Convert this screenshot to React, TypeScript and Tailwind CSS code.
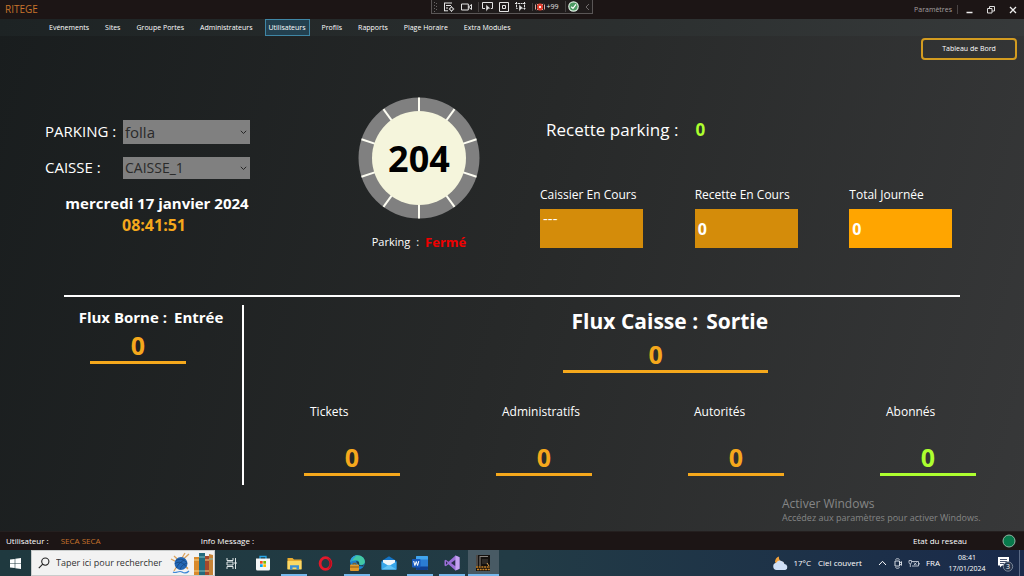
import type { ReactNode } from 'react';

const menu = ['Evénements', 'Sites', 'Groupe Portes', 'Administrateurs', 'Utilisateurs', 'Profils', 'Rapports', 'Plage Horaire', 'Extra Modules'];

const cards = [
  { label: 'Caissier En Cours', value: '---', box: 'bg-[#d48c0a] items-start text-[15px] leading-[19px]' },
  { label: 'Recette En Cours', value: '0', box: 'bg-[#d48c0a] items-center text-[16px] font-bold' },
  { label: 'Total Journée', value: '0', box: 'bg-[#ffa500] items-center text-[16px] font-bold' },
];

const stats = [
  { label: 'Tickets', tone: 'border-[#f5a81c] text-[#f5a81c]' },
  { label: 'Administratifs', tone: 'border-[#f5a81c] text-[#f5a81c]' },
  { label: 'Autorités', tone: 'border-[#f5a81c] text-[#f5a81c]' },
  { label: 'Abonnés', tone: 'border-[#adff2f] text-[#adff2f]' },
];

function DebugToolbar() {
  return (
    <div className="flex h-[14px] items-center gap-[6px] border border-t-0 border-[#5a5656] bg-[#1f1b1b] px-[2px] text-[#e4e4e4]">
      <svg width="4" height="12" viewBox="0 0 4 12" fill="#6a6666">
        <path d="M0 1h1v1H0zM2 2h1v1H2zM0 4h1v1H0zM2 5h1v1H2zM0 7h1v1H0zM2 8h1v1H2zM0 10h1v1H0z" />
      </svg>
      <button type="button" aria-label="Arborescence">
        <svg width="11" height="10" viewBox="0 0 11 10" fill="none" stroke="currentColor">
          <path d="M0 1h8M.5 1v8M2 3.500h5M2 6h2M0 8.800h4" />
          <circle cx="7.500" cy="7" r="1.700" />
          <path d="M7.500 4.200v1M7.500 8.800v1M4.900 7h1M9.200 7h1" />
        </svg>
      </button>
      <button type="button" aria-label="Caméra">
        <svg width="11" height="8" viewBox="0 0 11 8" fill="none" stroke="currentColor">
          <path d="M.5 1h6.800v6H.5zM7.500 4l3-2.500v5z" />
        </svg>
      </button>
      <button type="button" aria-label="Sélectionner" className="border-l border-[#454141] pl-[3px]">
        <svg width="11" height="10" viewBox="0 0 11 10" fill="none" stroke="currentColor">
          <path d="M3 6.500H.5v-6h10v6H9" />
          <path d="M4 2.500l4.800 4.300H6.500L4 9.500z" fill="currentColor" stroke="#1f1b1b" strokeWidth=".4" />
        </svg>
      </button>
      <button type="button" aria-label="Disposition">
        <svg width="10" height="10" viewBox="0 0 10 10" fill="none" stroke="currentColor">
          <path d="M.5.500h9v9h-9zM3.500 3.500h3v3h-3z" />
        </svg>
      </button>
      <button type="button" aria-label="Suivre le focus">
        <svg width="11" height="10" viewBox="0 0 11 10" fill="none" stroke="currentColor">
          <path d="M0 1.500h3M8 1.500h3M1.500 0v3M9.500 0v3M3 1.500h5M1.500 3v3.500H3M9.500 3v5M8 6.500h3" strokeDasharray="2 .6" />
          <path d="M4 2.500l4.800 4.300H6.500L4 9.500z" fill="currentColor" stroke="#1f1b1b" strokeWidth=".4" />
        </svg>
      </button>
      <button type="button" className="flex items-center gap-px border-l border-[#454141] pl-[2px] text-[7px] leading-none">
        <svg width="10" height="8" viewBox="0 0 10 8">
          <rect x="2" y=".5" width="6" height="7" rx="2.500" fill="#e0402f" />
          <path d="M.5 1.500v5M9.500 1.500v5M2 .8l1 1.200M8 .8L7 2M2 7.200L3 6M8 7.200L7 6" stroke="#f3b5ad" strokeWidth=".9" />
          <path d="M4 3l2 2M6 3L4 5" stroke="#fff" strokeWidth=".9" />
        </svg>
        +99
      </button>
      <button type="button" aria-label="État correct" className="border-l border-[#454141] pl-[2px]">
        <svg width="11" height="11" viewBox="0 0 11 11">
          <circle cx="5.500" cy="5.500" r="5.300" fill="#dfeee2" />
          <circle cx="5.500" cy="5.500" r="4.100" fill="#4c9a63" />
          <path d="M3.200 5.700l1.800 1.700 3-4" fill="none" stroke="#fff" strokeWidth="1.200" />
        </svg>
      </button>
      <button type="button" aria-label="Réduire la barre">
        <svg width="5" height="8" viewBox="0 0 5 8" fill="none" stroke="#6f6b6b">
          <path d="M4 1L1 4l3 3" />
        </svg>
      </button>
    </div>
  );
}

function Gauge() {
  const angles = [0, 36, 72, 108, 144, 180, 216, 252, 288, 324];
  return (
    <svg width="122" height="122" viewBox="0 0 122 122" role="img" aria-label="204">
      <circle cx="61" cy="61" r="60.500" fill="#808080" />
      {angles.map((a) => (
        <path key={a} d="M61 0.500V16" stroke="#fdfdf2" strokeWidth="2" transform={`rotate(${a} 61 61)`} />
      ))}
      <circle cx="61" cy="61" r="47" fill="#f5f5dc" />
      <text x="61" y="75" textAnchor="middle" fontSize="36" fontWeight="700" fill="#000">204</text>
    </svg>
  );
}

function Picker({ id, label, value, size }: { id: string; label: string; value: string; size: string }) {
  return (
    <div className="flex items-center">
      <label htmlFor={id} className="w-[78px] pb-[2px] text-[15px] leading-5 whitespace-nowrap">{label}</label>
      <div className="grid w-[127px] items-center">
        <select id={id} defaultValue={value} className={`col-start-1 row-start-1 w-full appearance-none bg-[#808080] px-[2px] leading-[22px] text-[#2a2a2a] ${size}`}>
          <option>{value}</option>
        </select>
        <svg className="pointer-events-none col-start-1 row-start-1 mr-[3px] justify-self-end" width="7" height="5" viewBox="0 0 7 5" fill="none" stroke="#262626">
          <path d="M.8.800L3.500 3.500 6.200.800" />
        </svg>
      </div>
    </div>
  );
}

function TaskButton({ label, open, active, children }: { label: string; open?: boolean; active?: boolean; children: ReactNode }) {
  return (
    <button
      type="button"
      aria-label={label}
      className={`flex justify-center pt-[2px] ${active ? 'bg-[#485a64]' : ''}`}
    >
      <span className={`flex h-full items-center justify-center border-b-2 ${active ? 'w-full' : 'w-[26px]'} ${open ? 'border-[#76b9ed]' : 'border-transparent'}`}>
        {children}
      </span>
    </button>
  );
}

function Taskbar() {
  return (
    <div className="flex h-[26px] items-stretch bg-linear-to-r from-[#1f393f] via-[#223b45] to-[#1a2a4a] text-white">
      <button type="button" aria-label="Démarrer" className="flex w-[31px] items-center justify-center">
        <svg width="11" height="11" viewBox="0 0 11 11" fill="#fff">
          <path d="M0 1.600L4.700.900v4.300H0zM5.300.800L11 0v5.200H5.300zM0 5.800h4.700v4.300L0 9.400zM5.300 5.800H11V11l-5.700-.8z" />
        </svg>
      </button>
      <div className="flex w-[184px] items-center border border-[#c9cccc] bg-[#f2f2f2] pl-[6px] text-[#333]">
        <svg width="12" height="12" viewBox="0 0 12 12" fill="none" stroke="#222" strokeWidth="1.100">
          <circle cx="7.300" cy="4.600" r="3.600" />
          <path d="M4.700 7.200L.8 11.200" />
        </svg>
        <input
          aria-label="Rechercher"
          placeholder="Taper ici pour rechercher"
          className="ml-[6px] min-w-0 flex-1 bg-transparent text-[9px] outline-none placeholder:text-[#333]"
        />
        <svg width="44" height="24" viewBox="0 0 44 24">
          <path d="M1 8l17 9M15 2L4 20M4 5l14 13M19 3L9 12" stroke="#dba25c" strokeWidth="1.300" />
          <circle cx="11" cy="12.500" r="6.500" fill="#2367b5" />
          <path d="M6 9.500c4-2.500 8-1 10.500 2M5 12.500c4-2.500 8-1 11 3M6.500 17c2-5 5-6 8-8.500M10 18.500c2-5 4-5 7-6.500" fill="none" stroke="#15467f" strokeWidth=".8" />
          <path d="M3 21c3 2 6-2 9 0s5 1 7-1" fill="none" stroke="#3c86d6" strokeWidth="1.200" />
          <path d="M24 6h5v18h-5z" fill="#d98a2b" />
          <path d="M29 2h6v22h-6z" fill="#246b7d" />
          <path d="M35 5h4v19h-4z" fill="#a5482d" />
          <path d="M39 3l4 1v20h-4z" fill="#c78436" />
          <path d="M24 9h5M24 20h5M35 9h4M35 20h4" stroke="#f2d08a" />
          <path d="M29 6h6M29 20h6M39 8h4" stroke="#7fc0c2" />
        </svg>
      </div>
      <button type="button" aria-label="Affichage des tâches" className="flex w-8 items-center justify-center">
        <svg width="11" height="11" viewBox="0 0 11 11" fill="none" stroke="#dfe6e8">
          <path d="M1 0v2.500h6V0M1 11V8.500h6V11M1 4h6v3H1zM9.500 0v11" />
          <path d="M8.500 4h2v2h-2z" fill="#dfe6e8" stroke="none" />
        </svg>
      </button>
      <div className="grid w-[252px] grid-cols-8">
        <TaskButton label="Microsoft Store">
          <svg width="16" height="16" viewBox="0 0 16 16">
            <path d="M5 4V1.500h6V4" fill="none" stroke="#2aa7e8" strokeWidth="1.300" />
            <path d="M1 3.500h14V14a1.500 1.500 0 0 1-1.500 1.500h-11A1.500 1.500 0 0 1 1 14z" fill="#f4f6f7" />
            <path d="M5 6h2.700v2.700H5z" fill="#f25022" />
            <path d="M8.300 6H11v2.700H8.300z" fill="#7fba00" />
            <path d="M5 9.300h2.700V12H5z" fill="#00a4ef" />
            <path d="M8.300 9.300H11V12H8.300z" fill="#ffb900" />
          </svg>
        </TaskButton>
        <TaskButton label="Explorateur de fichiers" open>
          <svg width="15" height="13" viewBox="0 0 15 13">
            <path d="M.5 1h5l1.500 1.500h7.500V12H.5z" fill="#e9ab2f" />
            <path d="M.5 4h14v8.500H.5z" fill="#fbd865" />
            <path d="M3 12.500V8.200h9v4.300h-2.500v-2h-4v2z" fill="#3c8fd6" />
          </svg>
        </TaskButton>
        <TaskButton label="Opera">
          <svg width="15" height="15" viewBox="0 0 15 15">
            <ellipse cx="7.500" cy="7.500" rx="5.400" ry="5.900" fill="none" stroke="#e3192b" strokeWidth="2.800" />
            <path d="M9.500 2.200c3 2 3 8.600 0 10.600 5.500-1 5.500-9.600 0-10.600z" fill="#b30c1d" />
          </svg>
        </TaskButton>
        <TaskButton label="Microsoft Edge" open>
          <svg width="16" height="16" viewBox="0 0 16 16">
            <circle cx="8.500" cy="7.500" r="7.300" fill="#1b82cf" />
            <path d="M1.300 7C2 2.500 5 .2 8.500.2c5 0 8 4 7.300 7.300-.5 2.300-4 3-6 1.800.8-1.500.3-4-2.600-4C4.500 5.300 2.500 6 1.300 7z" fill="#43c9a4" />
            <path d="M1.300 7c0-4 3.500-6.800 7.200-6.800C6 1.500 4 3.500 3.500 5.600z" fill="#2f9be0" />
            <path d="M7 6.500c2-1 4 1 3 3 1.500 1.200 3.500 1 5 0l-1 2-4-.5z" fill="#20404a" />
            <rect x="1" y="9.500" width="9" height="6.500" rx="1" fill="#e09a2c" />
            <path d="M4 9.500V8.300h3v1.200" fill="none" stroke="#8a5a14" />
            <path d="M1 12h9" stroke="#8a5a14" />
          </svg>
        </TaskButton>
        <TaskButton label="Courrier">
          <svg width="16" height="14" viewBox="0 0 16 14">
            <path d="M.5 5L8 .3 15.500 5v8.500H.5z" fill="#1474c4" />
            <path d="M2 4h12v6H2z" fill="#eef5fa" />
            <path d="M.5 5.500L8 10l7.500-4.500v8H.5z" fill="#37a6ea" />
            <path d="M.5 13.500L8 8.800l7.500 4.700z" fill="#62c3f5" />
          </svg>
        </TaskButton>
        <TaskButton label="Word" open>
          <svg width="16" height="14" viewBox="0 0 16 14">
            <rect x="4" width="12" height="14" rx="1" fill="#2b7cd3" />
            <path d="M4 1a1 1 0 0 1 1-1h10a1 1 0 0 1 1 1v2.500H4z" fill="#41a5ee" />
            <path d="M4 10.500h12V13a1 1 0 0 1-1 1H5a1 1 0 0 1-1-1z" fill="#103f91" />
            <rect y="3" width="8.500" height="8.500" rx=".8" fill="#185abd" />
            <path d="M1.700 5l1.200 4.500L4.250 5.500 5.600 9.500 6.800 5" fill="none" stroke="#fff" />
          </svg>
        </TaskButton>
        <TaskButton label="Visual Studio" open>
          <svg width="16" height="16" viewBox="0 0 16 16">
            <path d="M11.500.5l4 1.800v11.400l-4 1.800-7-6.300-2.700 2.100L.5 10.600V5.400l1.300-.7 2.700 2.100z" fill="#9b6fd8" />
            <path d="M11.500 4.700v6.600L7 8zM2 6.300v3.400L3.700 8z" fill="#2a2d4a" />
            <path d="M11.500.5l4 1.800v11.400l-4 1.800z" fill="#c4a2f0" />
          </svg>
        </TaskButton>
        <TaskButton label="Ritege" open active>
          <svg width="16" height="16" viewBox="0 0 16 16">
            <path d="M1 0h14v16H1z" fill="#15110e" />
            <path d="M2 0v11M5 1v10M5 1.500h8" stroke="#8a8580" />
            <path d="M7 4h6v5H7z" fill="#2e2a27" />
            <path d="M1 12h14M2 14.500h13" stroke="#c98227" strokeWidth="1.500" strokeDasharray="2 .7" />
            <path d="M12 8l2 3" stroke="#d9a55a" />
          </svg>
        </TaskButton>
      </div>
      <div className="ml-auto flex items-center text-[8px] whitespace-nowrap">
        <svg width="17" height="15" viewBox="0 0 17 15">
          <path d="M7 .5c-.5 3 1.500 5.500 5 5.800A5 5 0 0 1 3 6c0-2.500 1.500-4.700 4-5.500z" fill="#f2a33c" />
          <path d="M4.500 14a3.700 3.700 0 0 1-.3-7.300A4.600 4.600 0 0 1 12.500 8a3.100 3.100 0 0 1 .8 6z" fill="#cfe0f7" />
        </svg>
        <span className="ml-[4px]">17°C</span>
        <span className="ml-[7px]">Ciel couvert</span>
        <svg className="ml-[16px]" width="9" height="6" viewBox="0 0 9 6" fill="none" stroke="#fff">
          <path d="M1 5l3.500-3.700L8 5" />
        </svg>
        <svg className="ml-[7px]" width="8" height="11" viewBox="0 0 8 11" fill="none" stroke="#e8ecf2" strokeWidth=".9">
          <path d="M1 3h4.500v5H1zM5.500 5l2-1.300v3.600l-2-1.300M1.500 1.500c1-1 3-1 4 0M1.500 9.500c1 1 3 1 4 0" />
        </svg>
        <svg className="ml-[6px]" width="12" height="9" viewBox="0 0 12 9" fill="none" stroke="#c5ccd8" strokeWidth=".9">
          <path d="M4 2.500h6.500v4.500H4M11.300 4v1.500M1 1.500h2.500v2a1.200 1.200 0 0 1-2.500 0zM2.300 5v3M6 3.500l2.500 2.500M8.500 3.500L6 6" />
        </svg>
        <span className="ml-[6px]">FRA</span>
        <span className="ml-[8px] flex w-[38px] flex-col text-center text-[7px] leading-[11px]">
          <span>08:41</span>
          <span>17/01/2024</span>
        </span>
        <button type="button" aria-label="Notifications" className="ml-[11px]">
          <svg width="17" height="17" viewBox="0 0 17 17">
            <path d="M1 2h11v8.500H5L3 12.500v-2H1z" fill="#fff" />
            <path d="M3 4.500h7M3 6.500h7M3 8.500h4" stroke="#1a2a4a" strokeWidth=".8" />
            <circle cx="11" cy="11.500" r="4.700" fill="#26354c" stroke="#8e99aa" strokeWidth=".8" />
            <text x="11" y="14" textAnchor="middle" fontSize="7" fill="#fff">3</text>
          </svg>
        </button>
        <span className="ml-[5px] h-[26px] w-[5px] border-l border-[#5b6a86]" />
      </div>
    </div>
  );
}

export default function App() {
  return (
    <div className="flex min-h-screen flex-col bg-[#1c1515] font-['Open_Sans','Noto_Sans',sans-serif] text-white">
      <header className="grid h-[19px] grid-cols-[1fr_auto_1fr] items-start bg-[#1c1515]">
        <span className="pl-[5px] text-[10px] leading-[19px] text-[#c8742c]">RITEGE</span>
        <DebugToolbar />
        <div className="flex h-[19px] items-center justify-end pr-[7px] text-[7px] text-[#a5a0a0]">
          <button type="button" className="border-r border-[#4a4545] pr-[5px] leading-[9px]">Paramètres</button>
          <button type="button" aria-label="Réduire" className="ml-[8px]">
            <svg width="7" height="8" viewBox="0 0 7 8"><path d="M.5 6.500h6" stroke="#eee" strokeWidth="1.500" /></svg>
          </button>
          <button type="button" aria-label="Restaurer" className="ml-[14px]">
            <svg width="8" height="8" viewBox="0 0 8 8" fill="none" stroke="#ddd"><path d="M.5 2.500h4.500v4.500H.5zM2.500 2.500v-2h5v4.500H5" /></svg>
          </button>
          <button type="button" aria-label="Fermer" className="ml-[14px]">
            <svg width="8" height="8" viewBox="0 0 8 8" stroke="#eee" strokeWidth="1.300"><path d="M1 1l6 6M7 1L1 7" /></svg>
          </button>
        </div>
      </header>

      <main className="relative flex-1 bg-[linear-gradient(105deg,#191d1e,#272929_50%,#373839)]">
        <nav className="flex h-[17px] gap-[8px] bg-[#78a0a0]/5 pl-[45px] text-[7px] leading-[15px]">
          {menu.map((item) => (
            <a
              key={item}
              href="#"
              className={`border px-[3px] whitespace-nowrap ${item === 'Utilisateurs' ? 'border-[#3f86a5] bg-[#23404f]' : 'border-transparent'}`}
            >
              {item}
            </a>
          ))}
        </nav>

        <div className="flex justify-end pt-[2px] pr-[7px]">
          <button type="button" className="h-[22px] w-24 rounded-[4px] border-2 border-[#d39c20] text-[7px]">Tableau de Bord</button>
        </div>

        <section className="grid grid-cols-[320fr_198fr_506fr] items-start">
          <div className="pt-[60px] pl-[45px]">
            <div className="flex flex-col gap-[13px]">
              <Picker id="parking" label="PARKING :" value="folla" size="h-6 text-[15px]" />
              <Picker id="caisse" label="CAISSE :" value="CAISSE_1" size="h-[22px] text-[14px]" />
            </div>
            <div className="mt-[13px] w-[205px] pl-[19px] text-center text-[15px] leading-[22px] font-bold whitespace-nowrap">
              <p>mercredi 17 janvier 2024</p>
              <p className="pr-[6px] text-[16px] text-[#f5a81c]">08:41:51</p>
            </div>
          </div>

          <div className="flex flex-col items-center pt-[37px] pb-[42px]">
            <Gauge />
            <p className="mt-[12px] flex gap-[6px] text-[11px] leading-[22px]">
              <span>Parking</span>
              <span>:</span>
              <span className="text-[13px] font-bold text-[#f00000]">Fermé</span>
            </p>
          </div>

          <div className="pt-[58px] pr-5 pl-[22px]">
            <p className="flex gap-[17px] pl-[6px] text-[17px] leading-6">
              <span>Recette parking :</span>
              <span className="font-bold text-[#adff2f]">0</span>
            </p>
            <div className="mt-[43px] grid grid-cols-3">
              {cards.map((c) => (
                <div key={c.label}>
                  <p className="text-[12px] leading-[20px] whitespace-nowrap">{c.label}</p>
                  <div className={`mt-[4px] flex h-[39px] w-[103px] px-[3px] ${c.box}`}>{c.value}</div>
                </div>
              ))}
            </div>
          </div>
        </section>

        <hr className="mx-16 border-t-2 border-white" />

        <section className="flex pt-2 pb-[46px]">
          <div className="ml-16 h-[180px] w-[180px] border-r-2 border-white">
            <h2 className="flex justify-center gap-[7px] pr-1 text-[15px] leading-6 font-bold whitespace-nowrap">
              <span>Flux Borne :</span>
              <span>Entrée</span>
            </h2>
            <p className="ml-[26px] w-24 border-b-3 border-[#f5a81c] text-center text-[25px] leading-8 font-bold text-[#f5a81c]">0</p>
          </div>
          <div className="flex-1 pl-3">
            <div className="ml-[40%] w-[205px]">
              <h2 className="flex justify-end gap-2 text-[21px] leading-[33px] font-bold whitespace-nowrap">
                <span>Flux Caisse :</span>
                <span>Sortie</span>
              </h2>
              <p className="border-b-3 border-[#f5a81c] pr-5 text-center text-[25px] leading-8 font-bold text-[#f5a81c]">0</p>
            </div>
            <div className="mt-[29px] grid grid-cols-4">
              {stats.map((s) => (
                <div key={s.label} className="mx-auto w-24">
                  <p className="pl-[6px] text-[12px] leading-[20px] whitespace-nowrap">{s.label}</p>
                  <p className={`mt-[19px] border-b-3 text-center text-[25px] leading-8 font-bold ${s.tone}`}>0</p>
                </div>
              ))}
            </div>
          </div>
        </section>

        <aside className="absolute right-[41px] bottom-[7px] w-[201px] whitespace-nowrap text-[#858686]">
          <p className="text-[12px] leading-4">Activer Windows</p>
          <p className="text-[9px] leading-3">Accédez aux paramètres pour activer Windows.</p>
        </aside>
      </main>

      <footer>
        <div className="flex h-[19px] items-center border-t border-[#241f1f] bg-[#1c1515] pr-2 pl-[6px] text-[8px]">
          <span>Utilisateur :</span>
          <span className="ml-[12px] text-[#c8742c]">SECA SECA</span>
          <span className="ml-[100px]">Info Message :</span>
          <span className="ml-auto">Etat du reseau</span>
          <svg className="ml-[35px]" width="14" height="14" viewBox="0 0 14 14">
            <circle cx="7" cy="7" r="6" fill="#087a4c" stroke="#8fb5a4" />
          </svg>
        </div>
        <Taskbar />
      </footer>
    </div>
  );
}
